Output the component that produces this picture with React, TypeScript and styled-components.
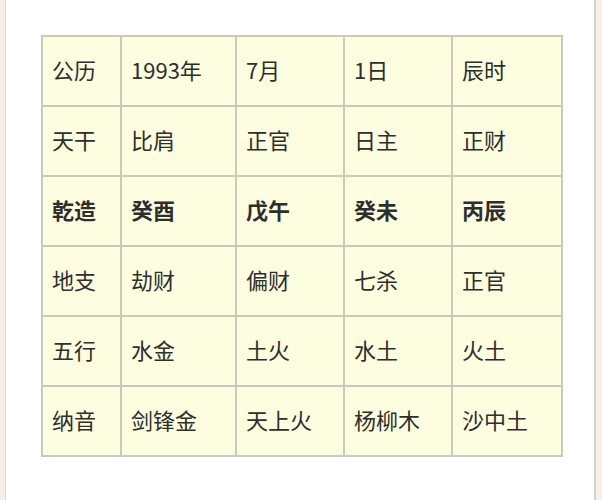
import React from "react";
import styled, { createGlobalStyle } from "styled-components";

const Global = createGlobalStyle`
  html, body { margin: 0; padding: 0; background: #ffffff; }
  body { font-family: "Noto Sans CJK SC", "Noto Sans", sans-serif; }
`;

const Frame = styled.div`
  background: #f6efe5;
  padding: 0 6px 0 5px;
  min-height: 500px;
  box-sizing: border-box;
  display: flex;
`;

const Sheet = styled.div`
  flex: 1;
  background: #ffffff;
  border-left: 1px solid #ddd4c7;
  border-right: 2px solid #d6d0c8;
  padding: 35px 0 0 35px;
  min-height: 500px;
  box-sizing: border-box;
`;

const Table = styled.table`
  border-collapse: collapse;
  table-layout: fixed;
  width: 520px;
  background: #fdfedf;
  border: 2px solid #cac9bc;
`;

const Cell = styled.td<{ $bold?: boolean }>`
  border: 2px solid #cac9bc;
  height: 70px;
  box-sizing: border-box;
  padding: 0 0 5px 9px;
  font-size: 22px;
  line-height: 1;
  color: #2e2e2e;
  font-weight: ${(p) => (p.$bold ? 700 : 400)};
  white-space: nowrap;
  vertical-align: middle;
`;

const widths = [79, 115, 108, 108, 110];

const rows: { cells: string[]; bold?: boolean }[] = [
  { cells: ["公历", "1993年", "7月", "1日", "辰时"] },
  { cells: ["天干", "比肩", "正官", "日主", "正财"] },
  { cells: ["乾造", "癸酉", "戊午", "癸未", "丙辰"], bold: true },
  { cells: ["地支", "劫财", "偏财", "七杀", "正官"] },
  { cells: ["五行", "水金", "土火", "水土", "火土"] },
  { cells: ["纳音", "剑锋金", "天上火", "杨柳木", "沙中土"] },
];

export default function App() {
  return (
    <>
      <Global />
      <Frame>
        <Sheet>
          <Table>
            <colgroup>
              {widths.map((w, i) => (
                <col key={i} style={{ width: w }} />
              ))}
            </colgroup>
            <tbody>
              {rows.map((r, i) => (
                <tr key={i}>
                  {r.cells.map((c, j) => (
                    <Cell key={j} $bold={r.bold}>
                      {c}
                    </Cell>
                  ))}
                </tr>
              ))}
            </tbody>
          </Table>
        </Sheet>
      </Frame>
    </>
  );
}
